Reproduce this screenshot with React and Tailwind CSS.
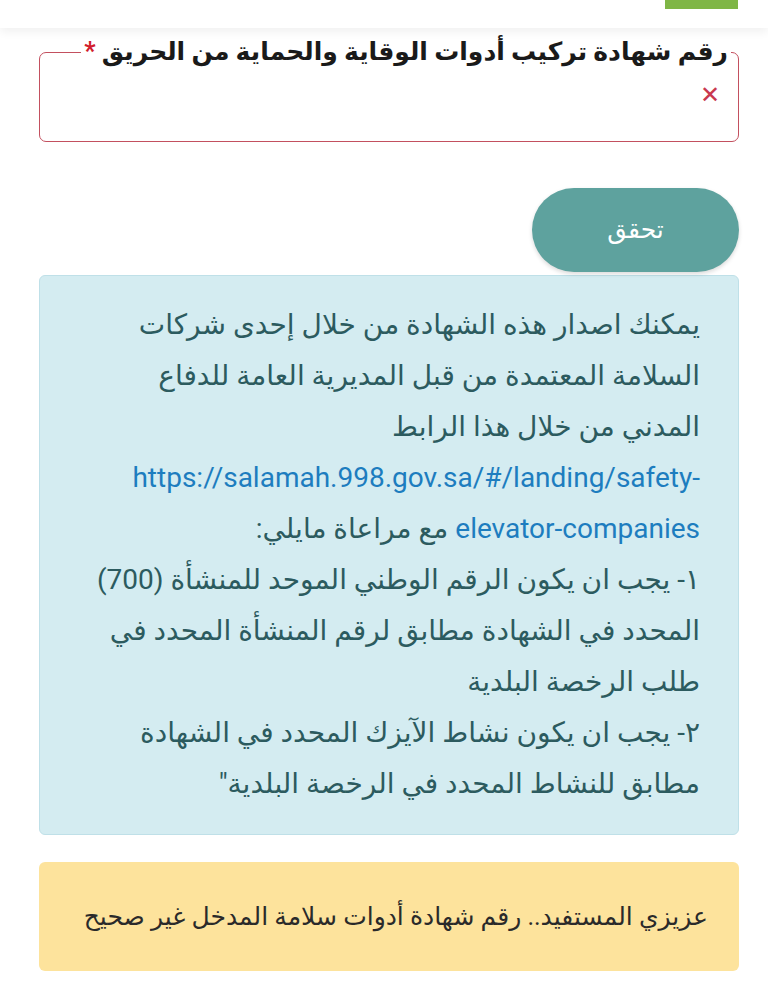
export default function App() {
  return (
    <div dir="rtl" className="w-[768px] h-[1004px] bg-white overflow-hidden font-['Roboto','DejaVu_Sans',sans-serif]">
      <div className="h-[28px] w-full bg-white shadow-[0_4px_10px_rgba(0,0,0,0.06)] flex justify-start pr-[30px]">
        <div className="w-[73px] h-[9px] bg-[#7fb646]"></div>
      </div>
      <div className="pr-[29px] pl-[39px] pt-[7px]">
        <fieldset className="border border-[#c3505f] rounded-[7px] h-[107px] pr-[18px] pl-[8px] m-0">
          <legend className="px-[3px] mr-[-11px] text-[25px] font-bold text-[#1a1a1a] leading-[34px]">
            رقم شهادة تركيب أدوات الوقاية والحماية من الحريق <span className="text-[#d21d2c]">*</span>
          </legend>
          <div className="mt-[14px] text-[#c9384f] text-[24px] font-bold leading-none">✕</div>
        </fieldset>
        <div className="flex justify-start mt-[46px]">
          <button className="w-[207px] h-[84px] rounded-full bg-[#5ea29e] text-white text-[25px] shadow-[0_2px_4px_rgba(0,0,0,0.15)]">
            تحقق
          </button>
        </div>
        <div className="mt-[3px] bg-[#d4ecf1] border border-[#bfe0e8] rounded-[6px] pr-[38px] pl-[20px] pt-[23px] pb-[25px] text-[#2c5b5f] text-[28px] leading-[51px] whitespace-nowrap">
          <p>
            يمكنك اصدار هذه الشهادة من خلال إحدى شركات
            <br />
            السلامة المعتمدة من قبل المديرية العامة للدفاع
            <br />
            المدني من خلال هذا الرابط
            <br />
            <span dir="ltr" className="text-[#1d7dbf]">https://salamah.998.gov.sa/#/landing/safety-</span>
            <br />
            <span dir="ltr" className="text-[#1d7dbf]">elevator-companies</span> مع مراعاة مايلي:
          </p>
          <p>
            ١- يجب ان يكون الرقم الوطني الموحد للمنشأة (700)
            <br />
            المحدد في الشهادة مطابق لرقم المنشأة المحدد في
            <br />
            طلب الرخصة البلدية
          </p>
          <p>
            ٢- يجب ان يكون نشاط الآيزك المحدد في الشهادة
            <br />
            مطابق للنشاط المحدد في الرخصة البلدية"
          </p>
        </div>
        <div className="mt-[27px] h-[109px] bg-[#fde39c] rounded-[6px] flex items-center pr-[31px] text-[#2a2a2a] text-[25px] whitespace-nowrap">
          عزيزي المستفيد.. رقم شهادة أدوات سلامة المدخل غير صحيح
        </div>
      </div>
    </div>
  );
}
